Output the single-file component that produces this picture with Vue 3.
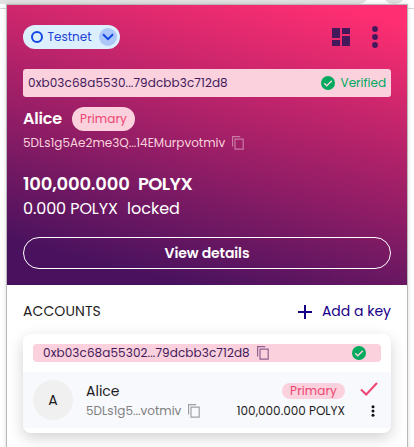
<script setup>
const identity = {
  did: '0xb03c68a5530...79dcbb3c712d8',
  name: 'Alice',
  address: '5DLs1g5Ae2me3Q...14EMurpvotmiv',
  balance: '100,000.000',
  locked: '0.000 POLYX',
}
const account = {
  did: '0xb03c68a55302...79dcbb3c712d8',
  address: '5DLs1g5...votmiv',
  balance: '100,000.000 POLYX',
}
</script>

<template>
  <div class="page">
    <div class="browser-bar"><span class="tab"></span><span class="knob"></span></div>
    <main class="popup">
      <header class="hero">
        <div class="topbar">
          <button class="network">
            <span class="ring"></span>
            <span class="network-name">Testnet</span>
            <span class="chevron">
              <svg width="18" height="18" viewBox="0 0 18 18"><path d="M4 6.2l5 5 5-5" fill="none" stroke="#1348e3" stroke-width="2" /></svg>
            </span>
          </button>
          <span class="grow"></span>
          <svg class="dash" width="18" height="18" viewBox="0 0 18 18" fill="#43195b"><path d="M0 0h8v10H0zM10 0h8v6h-8zM0 12h8v6H0zM10 8h8v10h-8z" /></svg>
          <svg class="dots" width="6" height="22" viewBox="0 0 6 22" fill="#43195b"><circle cx="3" cy="3" r="2.9" /><circle cx="3" cy="11" r="2.9" /><circle cx="3" cy="19" r="2.9" /></svg>
        </div>
        <div class="did-bar">
          <span class="did">{{ identity.did }}</span>
          <span class="grow"></span>
          <svg width="14" height="14" viewBox="0 0 14 14"><circle cx="7" cy="7" r="7" fill="#00aa5e" /><path d="M3.2 7.2l2.6 2.5 5-5" fill="none" stroke="#fad1dc" stroke-width="1.5" /></svg>
          <span class="verified">Verified</span>
        </div>
        <div class="name-row">
          <span class="name">{{ identity.name }}</span>
          <span class="primary">Primary</span>
        </div>
        <div class="address-row">
          <span class="address">{{ identity.address }}</span>
          <svg width="12" height="14" viewBox="0 0 12 14" fill="none" stroke="#c87aa5" stroke-width="1.2"><path d="M.6 10.5V.6h7.6M3 3.1h8.2v10.1H3z" /></svg>
        </div>
        <div class="balance"><span class="amount">{{ identity.balance }}</span><span class="unit">POLYX</span></div>
        <div class="locked"><span class="locked-amount">{{ identity.locked }}</span><span class="locked-label">locked</span></div>
        <button class="details"><span>View details</span></button>
      </header>

      <section class="accounts">
        <div class="accounts-head">
          <span class="title">ACCOUNTS</span>
          <span class="grow"></span>
          <svg width="14" height="14" viewBox="0 0 14 14"><path d="M7 0v14M0 7h14" stroke="#170087" stroke-width="2" /></svg>
          <span class="add">Add a key</span>
        </div>
        <div class="card">
          <div class="card-did">
            <span class="did small">{{ account.did }}</span>
            <svg width="12" height="14" viewBox="0 0 12 14" fill="none" stroke="#8f6190" stroke-width="1.2"><path d="M.6 10.5V.6h7.6M3 3.1h8.2v10.1H3z" /></svg>
            <span class="grow"></span>
            <svg width="14" height="14" viewBox="0 0 14 14"><circle cx="7" cy="7" r="7" fill="#00aa5e" /><path d="M3.2 7.2l2.6 2.5 5-5" fill="none" stroke="#fad1dc" stroke-width="1.5" /></svg>
          </div>
          <div class="account">
            <span class="avatar">A</span>
            <div class="who">
              <span class="who-name">Alice</span>
              <div class="who-address">
                <span>{{ account.address }}</span>
                <svg width="12" height="14" viewBox="0 0 12 14" fill="none" stroke="#a0a0a2" stroke-width="1.2"><path d="M.6 10.5V.6h7.6M3 3.1h8.2v10.1H3z" /></svg>
              </div>
            </div>
            <div class="holding">
              <span class="primary slim">Primary</span>
              <span class="holding-amount">{{ account.balance }}</span>
            </div>
            <div class="actions">
              <svg width="18" height="14" viewBox="0 0 18 14"><path d="M1 7.5l5.2 5L17 1" fill="none" stroke="#ec4673" stroke-width="2" /></svg>
              <svg class="more" width="4" height="12" viewBox="0 0 4 12" fill="#111"><circle cx="2" cy="1.7" r="1.5" /><circle cx="2" cy="6" r="1.5" /><circle cx="2" cy="10.3" r="1.5" /></svg>
            </div>
          </div>
        </div>
      </section>
    </main>
  </div>
</template>

<style>
body { background: #fff; overflow: hidden; }
</style>

<style scoped>
.page { width: 414px; height: 447px; overflow: hidden; position: relative; font-family: Poppins, Inter, "Noto Sans", sans-serif; color: #1e1e1e; box-sizing: border-box; padding: 5px 7px 0; }
.page *, .page *::before { box-sizing: border-box; }
.page span { white-space: nowrap; }
.page svg { flex-shrink: 0; }
button { font: inherit; margin: 0; padding: 0; border: 0; }
.browser-bar { position: absolute; left: 0; top: 0; width: 414px; height: 9px; background: #fff; border-bottom: 1px solid #d5d5d5; overflow: hidden; }
.tab { position: absolute; left: -20px; top: -20px; width: 390px; height: 24px; border-radius: 12px; background: #e1e1e1; }
.knob { position: absolute; left: 382px; top: -20px; width: 24px; height: 24px; border-radius: 12px; background: #dedede; }
.popup { position: relative; width: 400px; height: 450px; background: #fff; box-shadow: 0 0 0 1px #b9b9b9, 0 0 4px 1px rgba(0, 0, 0, .15); }
.hero { height: 280px; padding: 20px 16px 0; background: linear-gradient(194deg, #ff2e72 5%, #4a125e 88%); display: flex; flex-direction: column; }
.grow { flex: 1; }
.topbar { height: 24px; display: flex; align-items: center; flex-shrink: 0; }
.network { width: 97px; height: 24px; border-radius: 12px; background: #dceffe; display: flex; align-items: center; padding: 0 3px 0 8px; color: #1e44d5; }
.ring { width: 12px; height: 12px; border: 2px solid #1348e3; border-radius: 50%; }
.network-name { font-size: 12px; margin-left: 4.5px; flex: 1; text-align: left; }
.chevron { width: 18px; height: 18px; border-radius: 50%; background: #adc7f8; display: flex; }
.dash { margin-right: 22px; }
.dots { margin-right: 13px; }
.did-bar { height: 28px; margin-top: 20px; flex-shrink: 0; background: #fad1dc; border-radius: 3px; display: flex; align-items: center; padding: 0 5px; }
.did { font-size: 12px; color: #43195b; letter-spacing: .1px; }
.verified { font-size: 12px; color: #00aa5e; margin-left: 5px; }
.did-bar svg { margin-right: 0; position: relative; left: -1px; }
.name-row { height: 24px; margin-top: 10px; display: flex; align-items: center; gap: 10px; color: #fff; }
.name { font-size: 16px; font-weight: 600; width: 39px; letter-spacing: -.2px; padding-bottom: 2px; }
.primary { width: 63px; height: 24px; border-radius: 12px; background: #fad1dc; color: #ec4673; font-size: 12px; display: flex; align-items: center; justify-content: center; letter-spacing: .1px; }
.address-row { height: 18px; margin-top: 3px; display: flex; align-items: center; gap: 7px; color: #fad1dc; font-size: 12px; }
.address { width: 202px; }
.balance { height: 26px; margin-top: 19px; display: flex; align-items: center; color: #fff; font-size: 18px; font-weight: 600; }
.amount { width: 115px; letter-spacing: -.2px; }
.unit { letter-spacing: -.6px; }
.locked { height: 24px; display: flex; align-items: center; color: #fff; font-size: 16px; }
.locked-amount { width: 104px; letter-spacing: -.1px; }
.balance, .locked { padding-bottom: 2px; flex-shrink: 0; }
.details { height: 32px; margin-top: 16px; flex-shrink: 0; border: 1px solid #fff; border-radius: 16px; background: transparent; color: #fff; font-size: 14px; font-weight: 600; letter-spacing: -.1px; }
.accounts { height: 170px; padding: 16px 16px 0; background: #fff; }
.accounts-head { height: 21px; display: flex; align-items: center; font-size: 14px; }
.title { letter-spacing: .1px; }
.add { color: #170087; margin-left: 10px; }
.card { margin-top: 12px; height: 99px; border-radius: 8px; background: #fff; box-shadow: 0 5px 15px rgba(0, 0, 0, .18); overflow: hidden; padding-top: 10px; }
.card-did { height: 18px; margin: 0 10px; padding: 0 15px 0 10px; background: #fad1dc; border-radius: 4px; display: flex; align-items: center; }
.small { width: 207px; margin-right: 7px; }
.account { height: 56px; margin-top: 10px; background: #f8f9fd; padding: 8px 10px; display: flex; }
.avatar { width: 40px; height: 40px; border-radius: 50%; background: #f0f0f0; font-size: 14px; display: flex; align-items: center; justify-content: center; }
.who { margin-left: 13px; flex: 1; }
.who-name { font-size: 14px; line-height: 22px; display: block; }
.who-address { display: flex; align-items: center; height: 18px; font-size: 12px; color: #808080; }
.who-address span { width: 95px; margin-right: 7px; }
.holding { display: flex; flex-direction: column; align-items: flex-end; padding-top: 3px; }
.slim { height: 16px; }
.holding-amount { font-size: 12px; line-height: 18px; margin-top: 3px; }
.actions { width: 36px; display: flex; flex-direction: column; align-items: flex-end; padding: 2px 3px 0 0; }
.more { margin: 9px 3px 0 0; }
</style>
